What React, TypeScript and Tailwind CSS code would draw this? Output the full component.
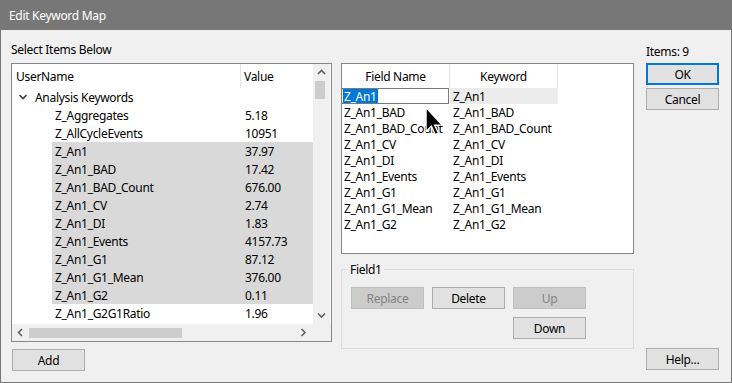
import React from "react";

const font = { fontFamily: '"Noto Sans", "Segoe UI", Arial, sans-serif' };

const leftRows: { name: string; value: string; sel?: boolean }[] = [
  { name: "Z_Aggregates", value: "5.18" },
  { name: "Z_AllCycleEvents", value: "10951" },
  { name: "Z_An1", value: "37.97", sel: true },
  { name: "Z_An1_BAD", value: "17.42", sel: true },
  { name: "Z_An1_BAD_Count", value: "676.00", sel: true },
  { name: "Z_An1_CV", value: "2.74", sel: true },
  { name: "Z_An1_DI", value: "1.83", sel: true },
  { name: "Z_An1_Events", value: "4157.73", sel: true },
  { name: "Z_An1_G1", value: "87.12", sel: true },
  { name: "Z_An1_G1_Mean", value: "376.00", sel: true },
  { name: "Z_An1_G2", value: "0.11", sel: true },
  { name: "Z_An1_G2G1Ratio", value: "1.96" },
];

const rightRows = [
  "Z_An1_BAD",
  "Z_An1_BAD_Count",
  "Z_An1_CV",
  "Z_An1_DI",
  "Z_An1_Events",
  "Z_An1_G1",
  "Z_An1_G1_Mean",
  "Z_An1_G2",
];

function Chevron({ dir, className }: { dir: "up" | "down" | "left" | "right"; className?: string }) {
  const d = {
    up: "M1 6 L4.5 2.5 L8 6",
    down: "M1 2.5 L4.5 6 L8 2.5",
    left: "M6 1 L2.5 4.5 L6 8",
    right: "M2.5 1 L6 4.5 L2.5 8",
  }[dir];
  return (
    <svg width="9" height="9" viewBox="0 0 9 9" className={className}>
      <path d={d} fill="none" stroke="#606060" strokeWidth="1.6" />
    </svg>
  );
}

function Btn({
  children,
  disabled,
  primary,
  className = "",
}: {
  children: React.ReactNode;
  disabled?: boolean;
  primary?: boolean;
  className?: string;
}) {
  const base = "w-[73px] h-[22px] flex items-center justify-center text-[12px] box-border pt-[2px]";
  const style = disabled
    ? "bg-[#cccccc] border border-[#bfbfbf] text-[#838383]"
    : primary
    ? "bg-[#e1e1e1] border-2 border-[#0078d7] text-black"
    : "bg-[#e1e1e1] border border-[#adadad] text-black";
  return <div className={`${base} ${style} ${className}`}>{children}</div>;
}

export default function App() {
  return (
    <div
      style={font}
      className="w-[732px] h-[383px] bg-[#f0f0f0] border-x border-b border-[#777777] box-border flex flex-col text-[12px] tracking-[-0.3px] text-black overflow-hidden"
    >
      {/* Title bar */}
      <div className="h-[30px] bg-[#777777] text-white flex items-center pl-[9px] pt-[2px] -mx-px shrink-0">
        Edit Keyword Map
      </div>

      <div className="flex flex-1 pl-[10px]">
        {/* Left column */}
        <div className="w-[321px] flex flex-col">
          <div className="mt-[12px] h-[16px] leading-[16px] mb-[5px]">Select Items Below</div>
          <div className="h-[279px] border border-[#828790] bg-white box-border flex flex-col">
            <div className="flex flex-1 min-h-0">
              <div className="w-[301px] flex flex-col">
                {/* header */}
                <div className="h-[24px] flex items-center shrink-0">
                  <div className="w-[229px] h-full flex items-center pl-[4px] pt-[2px] border-r border-[#e5e5e5]">
                    UserName
                  </div>
                  <div className="pl-[3px] pt-[2px]">Value</div>
                </div>
                {/* tree root */}
                <div className="h-[18px] flex items-center">
                  <svg width="10" height="8" viewBox="0 0 10 8" className="ml-[6px] mr-[7px]">
                    <path d="M1.5 2 L5 5.5 L8.5 2" fill="none" stroke="#404040" strokeWidth="1.6" />
                  </svg>
                  <span className="pt-[2px]">Analysis Keywords</span>
                </div>
                {leftRows.map((r) => (
                  <div key={r.name} className="h-[18px] flex items-center">
                    <div
                      className={`ml-[40px] flex flex-1 h-full items-center pt-[2px] box-border ${r.sel ? "bg-[#d9d9d9]" : ""}`}
                    >
                      <div className="w-[190px] pl-[3px]">{r.name}</div>
                      <div className="pl-[3px]">{r.value}</div>
                    </div>
                  </div>
                ))}
              </div>
              {/* vertical scrollbar */}
              <div className="w-[17px] bg-[#f0f0f0] flex flex-col items-center">
                <Chevron dir="up" className="mt-[4px]" />
                <div className="mt-[4px] w-[10px] h-[18px] bg-[#cdcdcd] ml-[-4px]" />
                <div className="flex-1" />
                <Chevron dir="down" className="mb-[4px]" />
              </div>
            </div>
            {/* horizontal scrollbar */}
            <div className="h-[17px] bg-[#f0f0f0] flex items-center shrink-0">
              <div className="w-[301px] flex items-center">
                <Chevron dir="left" className="ml-[4px]" />
                <div className="ml-[4px] w-[153px] h-[10px] bg-[#cdcdcd]" />
                <div className="flex-1" />
                <Chevron dir="right" className="mr-[5px]" />
              </div>
            </div>
          </div>
          <Btn className="mt-[7px] ml-px">Add</Btn>
        </div>

        {/* Middle column */}
        <div className="w-[293px] ml-[9px] flex flex-col">
          <div className="mt-[33px] h-[191px] border border-[#828790] bg-white box-border relative">
            <div className="h-[24px] flex">
              <div className="w-[108px] flex items-center justify-center pt-[2px] border-r border-[#e5e5e5]">
                Field Name
              </div>
              <div className="w-[108px] flex items-center justify-center pt-[2px] border-r border-[#e5e5e5]">
                Keyword
              </div>
            </div>
            {/* first row with editor */}
            <div className="h-[16px] flex">
              <div className="w-[108px] ml-[-1px] border border-[#7a7a7a] bg-white flex items-center pl-px box-border h-[16px]">
                <span className="bg-[#0078d7] text-white h-[14px] leading-[15px] px-px">Z_An1</span>
              </div>
              <div className="w-[108px] ml-px bg-[#ececec] flex items-center pl-[3px] pt-[2px]">Z_An1</div>
            </div>
            {rightRows.map((r) => (
              <div key={r} className="h-[16px] flex items-center pt-[2px] box-border">
                <div className="w-[109px] pl-[2px] whitespace-nowrap overflow-hidden">{r}</div>
                <div className="pl-[2px]">{r}</div>
              </div>
            ))}
            {/* mouse cursor */}
            <svg
              width="19"
              height="29"
              viewBox="0 0 12 19"
              className="absolute left-[83px] top-[43px]"
            >
              <path
                d="M0.5 0.5 L0.5 16 L4 12.5 L6.5 18 L8.5 17 L6 11.8 L11 11.8 Z"
                fill="#000"
                stroke="#fff"
                strokeWidth="0.8"
              />
            </svg>
          </div>

          {/* Group box */}
          <div className="mt-[15px] h-[80px] border border-[#dcdcdc] box-border relative">
            <div className="absolute -top-[8px] left-[6px] bg-[#f0f0f0] px-[2px] leading-[16px]">Field1</div>
            <div className="pl-[9px] pt-[17px] flex flex-col gap-[8px]">
              <div className="flex gap-[8px]">
                <Btn disabled>Replace</Btn>
                <Btn>Delete</Btn>
                <Btn disabled>Up</Btn>
              </div>
              <div className="flex pl-[162px]">
                <Btn>Down</Btn>
              </div>
            </div>
          </div>
        </div>

        {/* Right column */}
        <div className="ml-[12px] w-[73px] flex flex-col">
          <div className="mt-[14px] h-[16px] leading-[16px] mb-[3px]">Items: 9</div>
          <Btn primary>OK</Btn>
          <Btn className="mt-[3px]">Cancel</Btn>
          <div className="flex-1" />
          <Btn className="mb-[12px]">Help...</Btn>
        </div>
      </div>
    </div>
  );
}
